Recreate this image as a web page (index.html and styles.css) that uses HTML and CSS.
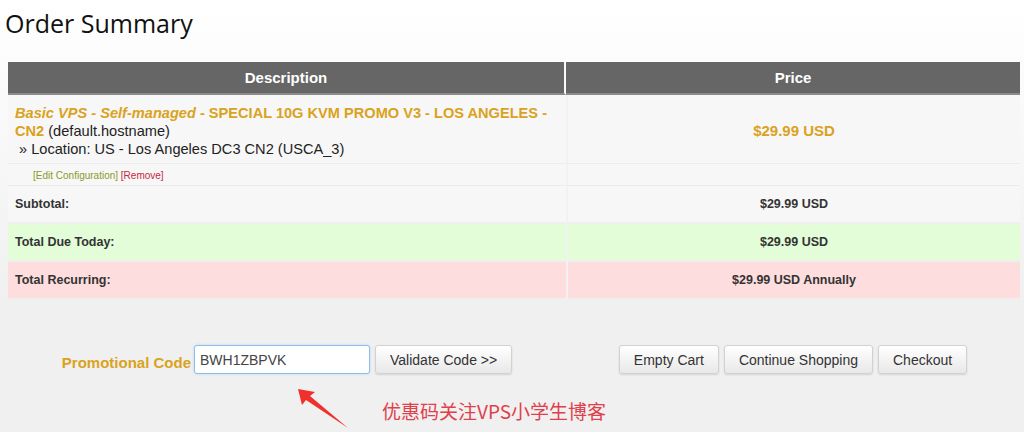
FILE: index.html
```html
<!DOCTYPE html>
<html lang="en">

<head>
    <meta charset="UTF-8">
    <title>Order Summary</title>
    <link rel="stylesheet" href="styles.css">
</head>

<body>

    <h1 class="titulo">Order Summary</h1>

    <!-- tabla del carrito -->
    <table class="carrito">
        <tr>
            <th class="col-desc">Description</th>
            <th class="col-precio">Price</th>
        </tr>
        <tr class="producto">
            <td>
                <em class="nombre">Basic VPS - Self-managed</em><b class="nombre"> - SPECIAL 10G KVM PROMO V3 - LOS ANGELES -</b><br>
                <b class="nombre">CN2</b> (default.hostname)<br>
                &nbsp;&raquo; Location: US - Los Angeles DC3 CN2 (USCA_3)
            </td>
            <td class="precio">$29.99 USD</td>
        </tr>
        <tr class="acciones">
            <td>
                <a href="#" class="editar">[Edit Configuration]</a> <a href="#" class="quitar">[Remove]</a>
            </td>
            <td></td>
        </tr>
        <tr class="resumen">
            <td>Subtotal:</td>
            <td class="centro">$29.99 USD</td>
        </tr>
        <tr class="resumen hoy">
            <td>Total Due Today:</td>
            <td class="centro">$29.99 USD</td>
        </tr>
        <tr class="resumen recurrente">
            <td>Total Recurring:</td>
            <td class="centro">$29.99 USD Annually</td>
        </tr>
    </table>

    <!-- codigo promocional y botones -->
    <div class="pie">
        <form action="#" class="promo">
            <label class="etiqueta" for="codigo">Promotional Code</label>
            <input type="text" id="codigo" class="campo" value="BWH1ZBPVK">
            <input type="button" class="boton" value="Validate Code >>">
        </form>
        <div class="botones">
            <input type="button" class="boton" value="Empty Cart">
            <input type="button" class="boton" value="Continue Shopping">
            <input type="button" class="boton" value="Checkout">
        </div>
    </div>

    <div class="nota">
        <svg class="flecha" width="62" height="50" viewBox="0 0 62 50">
            <polygon points="8,7 25,10 20,14 58,46 16,18 12,23" fill="#f0302a" />
        </svg>
        <span class="texto-nota">优惠码关注VPS小学生博客</span>
    </div>

</body>

</html>
```

FILE: styles.css
```css
/*pagina: fondo gris claro, fuente tipo Arial*/
body {
    margin: 0;
    padding: 0 4px 0 8px;
    background: linear-gradient(#ffffff, #f0f0f0 300px);
    font-family: "Liberation Sans", Arial, sans-serif;
    color: #222;
}

/*titulo grande*/
.titulo {
    margin: 0;
    padding: 6px 0 0 0;
    margin-left: -3px;
    height: 56px;
    font-family: "Open Sans", sans-serif;
    font-size: 25px;
    font-weight: 400;
    color: #111;
}

/*tabla: columnas y cabecera gris oscuro*/
.carrito {
    width: 1012px;
    border-collapse: separate;
    border-spacing: 0;
    font-size: 14px;
}

.carrito th {
    height: 31px;
    padding: 0;
    background-color: #666;
    border-bottom: 2px solid #8a8a8a;
    color: white;
    font-size: 15px;
    font-weight: bold;
}

.carrito .col-desc {
    width: 556px;
    border-right: 2px solid #fafafa;
}

.carrito td {
    padding: 0 7px;
    background-color: #f7f7f7;
    border-bottom: 1px solid #ececec;
}

.carrito td + td {
    border-left: 2px solid #f2f2f2;
}

/*fila del producto*/
.producto td {
    height: 64px;
    padding-top: 4px;
    font-size: 14.6px;
    line-height: 18px;
    vertical-align: middle;
}

.nombre {
    color: #daa21d;
    font-weight: bold;
}

em.nombre {
    font-style: italic;
}

.carrito .precio {
    text-align: center;
    color: #daa21d;
    font-weight: bold;
    font-size: 15px;
}

.acciones td {
    height: 19px;
    padding-top: 2px;
    padding-left: 25px;
    font-size: 10px;
    line-height: 12px;
}

.acciones a {
    text-decoration: none;
}

.editar {
    color: #8a9a2a;
}

.quitar {
    color: #c8283a;
}

/*filas de totales*/
.resumen td {
    height: 36px;
    font-size: 12.5px;
    font-weight: bold;
    color: #333;
    border-bottom: 2px solid #efefef;
}

.resumen .centro {
    text-align: center;
}

.hoy td {
    background-color: #e2fdd8;
}

.recurrente td {
    background-color: #fddddd;
}

/*zona inferior: dos mitades centradas*/
.pie {
    display: grid;
    grid-template-columns: 558px 454px;
    margin-top: 45px;
    align-items: center;
}

.promo {
    display: flex;
    justify-content: center;
    align-items: center;
    margin: 0;
}

.etiqueta {
    margin-top: 6px;
    margin-right: 3px;
    color: #daa21d;
    font-weight: bold;
    font-size: 15px;
}

.campo {
    box-sizing: border-box;
    width: 176px;
    height: 29px;
    margin: 0 5px 0 0;
    padding: 0 5px;
    border: 1px solid #8fbde6;
    border-radius: 3px;
    box-shadow: 0 0 3px #b8d8f4;
    font-family: "Liberation Sans", Arial, sans-serif;
    font-size: 14px;
    color: #444;
    background: white;
}

.botones {
    display: flex;
    justify-content: center;
    gap: 5px;
}

.boton {
    box-sizing: border-box;
    height: 29px;
    padding: 0 14px;
    margin: 0;
    border: 1px solid #d2d2d2;
    border-radius: 3px;
    background: linear-gradient(#ffffff, #e8e8e8);
    box-shadow: 0 1px 2px rgba(0, 0, 0, 0.12);
    font-family: "Liberation Sans", Arial, sans-serif;
    font-size: 14px;
    color: #333;
}

/*nota en rojo con flecha*/
.nota {
    display: flex;
    align-items: flex-start;
    padding-left: 282px;
    margin-top: 8px;
}

.texto-nota {
    margin-left: 30px;
    margin-top: 15px;
    font-family: "Noto Sans CJK SC", sans-serif;
    font-size: 19px;
    color: #e0404c;
}
```
